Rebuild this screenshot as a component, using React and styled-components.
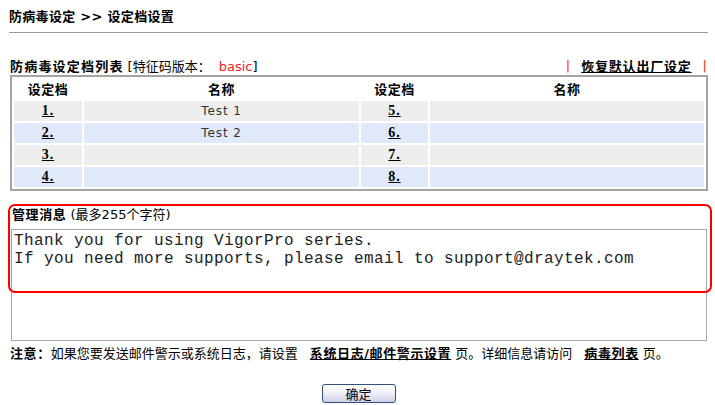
import React from 'react'
import styled, { createGlobalStyle } from 'styled-components'

const GlobalStyle = createGlobalStyle`
    body {
        margin: 0;
        background: #ffffff;
        font-family: "DejaVu Sans", "Noto Sans CJK SC", sans-serif;
        color: #000;
    }
`

const Page = styled.div`
    width: 699px;
    padding: 8px 7px 0 9px;
`
const Title = styled.div`
    font-size: 13px;
    font-weight: 700;
    height: 18px;
    line-height: 18px;
    letter-spacing: 0.3px;
`
const Rule = styled.div`
    margin-top: 6px;
    border-top: 1px solid #9a9a9a;
`
const SectionHead = styled.div`
    display: flex;
    justify-content: space-between;
    align-items: center;
    margin-top: 24px;
    height: 17px;
    padding: 0 0 0 1px;
`
const HeadTitle = styled.span`
    font-size: 13px;
    font-weight: 700;
    letter-spacing: 1.2px;
`
const HeadNote = styled.span`
    font-size: 13px;
    margin-left: 4px;
`
const Red = styled.span`
    color: #ff1a1a;
    margin-left: ${props => props.gap || 0}px;
`
const HeadLinks = styled.div`
    display: flex;
    align-items: center;
    gap: 11px;
    font-size: 13px;
    padding-right: 1px;
`
const Link = styled.a`
    color: #000;
    font-weight: 700;
    text-decoration: underline;
    letter-spacing: ${props => props.spacing || 0}px;
    cursor: pointer;
`
const Table = styled.table`
    margin-top: 1px;
    margin-left: 1px;
    width: 698px;
    border: 2px solid #a4a4a4;
    border-collapse: separate;
    border-spacing: 2px;
    table-layout: fixed;
`
const Th = styled.th`
    height: 19px;
    padding: 0 0 1px;
    font-size: 13px;
    font-weight: 700;
    background: #ffffff;
    letter-spacing: 0.5px;
`
const Td = styled.td`
    height: 20px;
    padding: 0;
    text-align: center;
    font-size: 12px;
    color: #333;
    letter-spacing: 0.9px;
    background: ${props => (props.alt ? '#dfe9f9' : '#eeeeee')};
`
const Num = styled.a`
    font-family: "Liberation Serif", serif;
    font-size: 14px;
    font-weight: 700;
    color: #000;
    text-decoration: underline;
`
const MessageSection = styled.div`
    position: relative;
    margin-top: 13px;
`
const MsgLabel = styled.div`
    padding: 3px 0 0 3px;
    height: 20px;
    line-height: 16px;
    font-size: 13px;
`
const Bold = styled.b`
    font-weight: 700;
    letter-spacing: 0.6px;
`
const MessageBox = styled.textarea`
    display: block;
    box-sizing: border-box;
    margin: 2px 0 0 2px;
    width: 696px;
    height: 112px;
    padding: 2px 2px 1px;
    border: 1px solid #a8a8a8;
    resize: none;
    font-family: "Liberation Mono", monospace;
    font-size: 16px;
    line-height: 18px;
    letter-spacing: 0.4px;
    color: #222;
    outline: none;
`
const Highlight = styled.div`
    position: absolute;
    top: 0;
    left: -1px;
    width: 700px;
    height: 85px;
    border: 2px solid #f00;
    border-radius: 7px;
    pointer-events: none;
`
const Note = styled.div`
    margin-top: 5px;
    padding-left: 1px;
    height: 16px;
    line-height: 16px;
    font-size: 13px;
    white-space: nowrap;
`
const Gap = styled.span`
    display: inline-block;
    width: ${props => props.w}px;
`
const ButtonRow = styled.div`
    display: flex;
    justify-content: center;
    margin-top: 22px;
`
const Button = styled.button`
    width: 74px;
    height: 19px;
    padding: 0;
    border: 1px solid #33507a;
    border-radius: 3px;
    background: linear-gradient(#ffffff 0%, #f1f1f8 45%, #cfd0e6 100%);
    font-family: "Noto Sans CJK SC", sans-serif;
    font-size: 13px;
    line-height: 17px;
    color: #000;
    cursor: pointer;
`

const profiles = [
    ['1.', 'Test 1', '5.', ''],
    ['2.', 'Test 2', '6.', ''],
    ['3.', '', '7.', ''],
    ['4.', '', '8.', ''],
]

export default function App() {
    return (
        <Page>
            <GlobalStyle />
            <Title>防病毒设定 &gt;&gt; 设定档设置</Title>
            <Rule />
            <SectionHead>
                <div>
                    <HeadTitle>防病毒设定档列表</HeadTitle>
                    <HeadNote>[特征码版本：<Red gap={8}>basic</Red>]</HeadNote>
                </div>
                <HeadLinks>
                    <Red>|</Red>
                    <Link spacing={0.8}>恢复默认出厂设定</Link>
                    <Red>|</Red>
                </HeadLinks>
            </SectionHead>
            <Table>
                <colgroup>
                    <col style={{ width: 68 }} />
                    <col style={{ width: 275 }} />
                    <col style={{ width: 67 }} />
                    <col />
                </colgroup>
                <thead>
                    <tr>
                        <Th>设定档</Th>
                        <Th>名称</Th>
                        <Th>设定档</Th>
                        <Th>名称</Th>
                    </tr>
                </thead>
                <tbody>
                    {profiles.map((row, i) => (
                        <tr key={row[0]}>
                            <Td alt={i % 2 === 1}><Num>{row[0]}</Num></Td>
                            <Td alt={i % 2 === 1}>{row[1]}</Td>
                            <Td alt={i % 2 === 1}><Num>{row[2]}</Num></Td>
                            <Td alt={i % 2 === 1}>{row[3]}</Td>
                        </tr>
                    ))}
                </tbody>
            </Table>
            <MessageSection>
                <MsgLabel><Bold>管理消息</Bold> (最多255个字符)</MsgLabel>
                <MessageBox
                    defaultValue={'Thank you for using VigorPro series.\nIf you need more supports, please email to support@draytek.com'}
                />
                <Highlight />
            </MessageSection>
            <Note>
                <Bold>注意：</Bold>如果您要发送邮件警示或系统日志，请设置<Gap w={12} />
                <Link spacing={0.6}>系统日志/邮件警示设置</Link> 页。详细信息请访问<Gap w={12} />
                <Link spacing={0.6}>病毒列表</Link> 页。
            </Note>
            <ButtonRow>
                <Button>确定</Button>
            </ButtonRow>
        </Page>
    )
}
